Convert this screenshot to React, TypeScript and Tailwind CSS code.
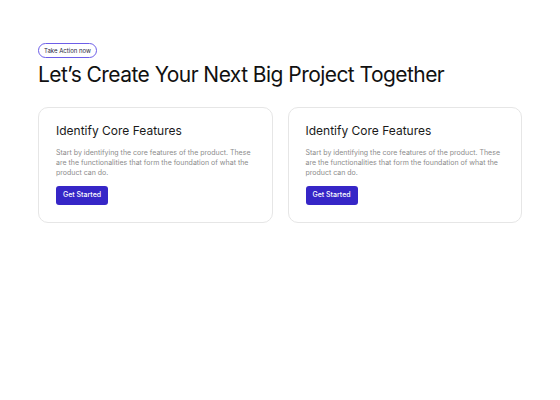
const CARDS = [
    {
        title: 'Identify Core Features',
        body: 'Start by identifying the core features of the product. These are the functionalities that form the foundation of what the product can do.',
    },
    {
        title: 'Identify Core Features',
        body: 'Start by identifying the core features of the product. These are the functionalities that form the foundation of what the product can do.',
    },
]

function FeatureCard({ title, body }: { title: string; body: string }) {
    return (
        <div className="flex-1 rounded-[10px] border border-[#e6e6e6] bg-white px-[17px] pt-[15px] pb-[17px]">
            <h3 className="text-[12px] leading-[16px] text-[#1a1a1a]">{title}</h3>
            <p className="mt-[9px] text-[7px] leading-[10px] text-[#8c8c8c]">{body}</p>
            <button className="mt-[8px] block h-[19px] rounded-[3px] bg-[#3626c7] px-[7px] text-[7px] font-medium text-white">
                Get Started
            </button>
        </div>
    )
}

export default function App() {
    return (
        <div
            className="flex min-h-[400px] w-[560px] flex-col items-start bg-white px-[38px] pt-[43px]"
            style={{ fontFamily: 'Inter, "Noto Sans", sans-serif' }}
        >
            <span className="flex h-[15px] items-center rounded-full border border-[#6d5ee8] px-[5px] text-[6px] leading-none text-[#1f1f3a]">
                Take Action now
            </span>
            <h1 className="mt-[3px] text-[21px] leading-[28px] tracking-[-0.55px] text-[#111111]">
                Let’s Create Your Next Big Project Together
            </h1>
            <div className="mt-[18px] flex w-full gap-[15px]">
                {CARDS.map((c, i) => (
                    <FeatureCard key={i} title={c.title} body={c.body} />
                ))}
            </div>
        </div>
    )
}
